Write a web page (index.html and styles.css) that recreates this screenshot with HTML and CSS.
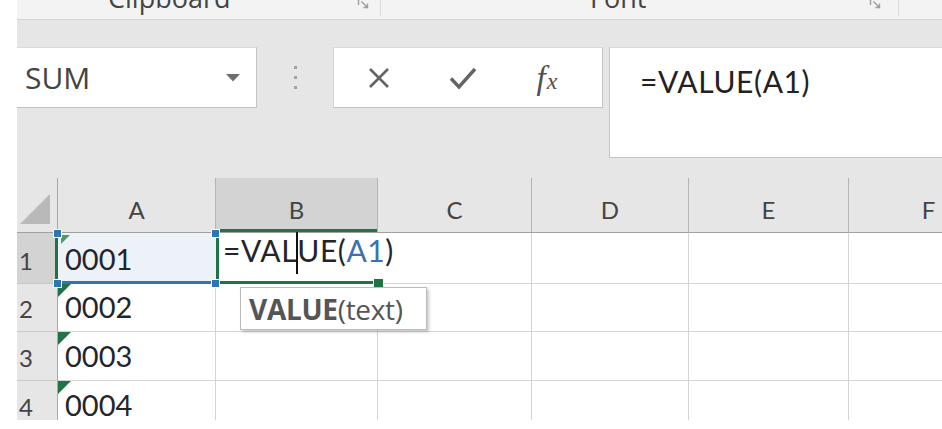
FILE: index.html
```html
<!DOCTYPE html>
<html lang="en">
<head>
  <meta charset="UTF-8" />
  <meta name="viewport" content="width=device-width, initial-scale=1.0" />
  <title>VALUE(A1)</title>
  <link rel="stylesheet" href="styles.css">
</head>
<body>
  <div class="window">
    <div class="ribbon-foot">
      <div class="group group-clipboard">
        <span class="group-label">Clipboard</span>
        <svg class="launcher" width="13" height="13" viewBox="0 0 13 13"><path d="M1.5 8V1.5H8M4.5 4.5L10.5 10.5M10.5 6.5V10.5H6.5" fill="none" stroke="#9d9d9d" stroke-width="1.4"/></svg>
      </div>
      <div class="group group-font">
        <span class="group-label">Font</span>
        <svg class="launcher" width="13" height="13" viewBox="0 0 13 13"><path d="M1.5 8V1.5H8M4.5 4.5L10.5 10.5M10.5 6.5V10.5H6.5" fill="none" stroke="#9d9d9d" stroke-width="1.4"/></svg>
      </div>
    </div>

    <div class="formula-row">
      <div class="name-box">
        <span>SUM</span>
        <svg class="drop" width="14" height="8" viewBox="0 0 14 8"><path d="M0 0H14L7 7.5Z" fill="#6e6e6e"/></svg>
      </div>
      <div class="grip"><i></i><i></i><i></i></div>
      <div class="fx-buttons">
        <span class="btn">
          <svg width="22" height="22" viewBox="0 0 22 22"><path d="M2 2L20 20M20 2L2 20" stroke="#646464" stroke-width="2.6" fill="none"/></svg>
        </span>
        <span class="btn">
          <svg width="28" height="24" viewBox="0 0 28 24"><path d="M2 12.5L10 21L26 3" stroke="#646464" stroke-width="3.4" fill="none"/></svg>
        </span>
        <span class="btn fx"><i>f</i><i class="fx-x">x</i></span>
      </div>
      <div class="formula-input">=VALUE(A1)</div>
    </div>

    <div class="sheet">
      <div class="corner">
        <svg width="30" height="30" viewBox="0 0 30 30"><path d="M30 0V30H0Z" fill="#b9b9b9"/></svg>
      </div>
      <div class="col-head">A</div>
      <div class="col-head active">B</div>
      <div class="col-head">C</div>
      <div class="col-head">D</div>
      <div class="col-head">E</div>
      <div class="col-head">F</div>

      <div class="row-head active"><span>1</span></div>
      <div class="cell ref flag flag-small"><span>0001</span></div>
      <div class="cell edit">
        <span>=VAL<i class="caret"></i>UE(<b class="ref-text">A1</b>)</span>
        <i class="fill-handle"></i>
      </div>
      <div class="cell"></div>
      <div class="cell"></div>
      <div class="cell"></div>
      <div class="cell"></div>

      <div class="row-head"><span>2</span></div>
      <div class="cell flag"><span>0002</span></div>
      <div class="cell"></div>
      <div class="cell"></div>
      <div class="cell"></div>
      <div class="cell"></div>
      <div class="cell"></div>

      <div class="row-head"><span>3</span></div>
      <div class="cell flag"><span>0003</span></div>
      <div class="cell"></div>
      <div class="cell"></div>
      <div class="cell"></div>
      <div class="cell"></div>
      <div class="cell"></div>

      <div class="row-head"><span>4</span></div>
      <div class="cell flag"><span>0004</span></div>
      <div class="cell"></div>
      <div class="cell"></div>
      <div class="cell"></div>
      <div class="cell"></div>
      <div class="cell"></div>

      <!-- range handles of the A1 reference -->
      <i class="handle h-tl"></i>
      <i class="handle h-tr"></i>
      <i class="handle h-bl"></i>
      <i class="handle h-br"></i>

      <div class="tooltip"><b>VALUE</b>(text)</div>
    </div>
  </div>
</body>
</html>
```

FILE: styles.css
```css
* {
  box-sizing: border-box;
  margin: 0;
  padding: 0;
}

body {
  background: #ffffff;
  width: 942px;
  height: 429px;
  overflow: hidden;
  font-family: 'Open Sans', sans-serif;
}

.window {
  margin-left: 17px;
  height: 420px;
  background: #e6e6e6;
  overflow: hidden;
}

/* ribbon group captions, cut at the top */
.ribbon-foot {
  height: 20px;
  background: #f3f3f3;
  border-bottom: 1px solid #d3d3d3;
  display: flex;
  align-items: flex-start;
  overflow: hidden;
}

.group {
  height: 16px;
  display: flex;
  align-items: flex-end;
  border-right: 1px solid #dadada;
}

.group-clipboard {
  width: 364px;
}

.group-font {
  width: 518px;
}

.group-label {
  font-size: 27px;
  line-height: 26px;
  color: #444;
  margin-bottom: 5px;
}

.group-clipboard .group-label {
  margin-left: 91px;
}

.group-font .group-label {
  margin-left: 209px;
}

.launcher {
  align-self: flex-start;
  margin-top: -3px;
  margin-left: auto;
}

.group-clipboard .launcher {
  margin-right: 10px;
}

.group-font .launcher {
  margin-right: 16px;
}

/* name box + formula bar */
.formula-row {
  height: 158px;
  padding-top: 27px;
  display: flex;
  align-items: flex-start;
}

.name-box,
.fx-buttons {
  height: 61px;
  background: #ffffff;
  border-top: 1px solid #dadada;
  border-right: 1px solid #c4c4c4;
  border-bottom: 1px solid #c4c4c4;
  display: flex;
  align-items: center;
}

.name-box {
  width: 240px;
  padding: 0 16px 0 8px;
  justify-content: space-between;
  font-size: 30px;
  color: #444;
}

.grip {
  width: 76px;
  height: 61px;
  display: flex;
  flex-direction: column;
  align-items: center;
  justify-content: center;
  gap: 7px;
}

.grip i {
  width: 3px;
  height: 3px;
  background: #a3a3a3;
}

.fx-buttons {
  width: 270px;
  padding-left: 3px;
  border-left: 1px solid #d2d2d2;
}

.btn {
  width: 84px;
  display: flex;
  justify-content: center;
  align-items: center;
}

.fx {
  font-family: 'Liberation Serif', serif;
  font-style: italic;
  color: #505050;
  font-size: 33px;
  line-height: 34px;
}

.fx i {
  font-style: italic;
}

.fx-x {
  font-size: 24px;
  margin: 7px 0 0 1px;
}

.formula-input {
  flex: 1;
  height: 111px;
  margin-left: 6px;
  background: #ffffff;
  border-top: 1px solid #dadada;
  border-left: 1px solid #c4c4c4;
  border-bottom: 1px solid #c4c4c4;
  padding: 18px 0 0 30px;
  font-family: 'Lato', sans-serif;
  font-size: 30px;
  line-height: 30px;
  letter-spacing: 0.6px;
  color: #222;
}

/* worksheet */
.sheet {
  position: relative;
  display: grid;
  grid-template-columns: 41px 158px 162px 154px 157px 160px 160px;
  grid-template-rows: 55px 51px 48px 49px 49px;
  font-family: 'Lato', sans-serif;
}

.corner,
.col-head,
.row-head {
  background: #e6e6e6;
  color: #444;
  font-size: 24px;
  line-height: 24px;
  display: flex;
  align-items: flex-end;
}

.corner {
  border-right: 1px solid #a8a8a8;
  border-bottom: 1px solid #a0a0a0;
  padding: 0 0 8px 3px;
}

.col-head {
  justify-content: center;
  border-right: 1px solid #b5b5b5;
  border-bottom: 1px solid #a0a0a0;
  padding-bottom: 10px;
}

.col-head.active {
  background: #d3d3d3;
  box-shadow: inset 0 -3px 0 #217346;
}

.row-head {
  border-right: 1px solid #a8a8a8;
  border-bottom: 1px solid #c9c9c9;
  padding: 0 0 10px 2px;
}

.row-head.active {
  background: #d3d3d3;
  border-right: 3px solid #217346;
}

.cell {
  position: relative;
  background: #ffffff;
  border-right: 1px solid #d4d4d4;
  border-bottom: 1px solid #d4d4d4;
  display: flex;
  align-items: flex-end;
  padding: 0 0 9px 7px;
  font-size: 29px;
  line-height: 30px;
  color: #23252b;
  white-space: nowrap;
}

.cell.ref {
  background: #edf2f9;
  border-right: none;
  border-bottom: 3px solid #2f75b5;
  padding-bottom: 7px;
}

.cell.edit {
  z-index: 1;
  border-left: 3px solid #217346;
  border-right: none;
  border-bottom: 3px solid #217346;
  padding: 0 0 7px 4px;
  overflow: visible;
  font-size: 30px;
  letter-spacing: 0.6px;
}

.ref-text {
  font-weight: normal;
  color: #3d6fb6;
}

.caret {
  display: inline-block;
  width: 2px;
  height: 42px;
  margin: 0 -1px;
  background: #111;
  vertical-align: -12px;
}

.fill-handle {
  position: absolute;
  right: -6px;
  bottom: -7px;
  width: 11px;
  height: 10px;
  background: #217346;
  border: 1px solid #ffffff;
}

/* number stored as text marker */
.flag::before {
  content: "";
  position: absolute;
  left: 0;
  top: 0;
  border-top: 13px solid #227447;
  border-right: 13px solid transparent;
}

.flag-small::before {
  left: 3px;
  top: 2px;
  border-top: 9px solid #4e9a68;
  border-right: 9px solid transparent;
}

.handle {
  position: absolute;
  z-index: 2;
  width: 9px;
  height: 9px;
  background: #2f75b5;
  border: 1px solid #ffffff;
}

.h-tl { left: 36px; top: 51px; }
.h-tr { left: 194px; top: 51px; }
.h-bl { left: 36px; top: 101px; }
.h-br { left: 194px; top: 101px; }

.tooltip {
  position: absolute;
  z-index: 3;
  left: 223px;
  top: 109px;
  width: 187px;
  height: 43px;
  background: #ffffff;
  border: 1px solid #bcbcbc;
  box-shadow: 2px 2px 3px rgba(0, 0, 0, 0.22);
  display: flex;
  align-items: center;
  padding-left: 8px;
  font-family: 'Open Sans', sans-serif;
  font-size: 28px;
  letter-spacing: -0.3px;
  color: #555;
  white-space: nowrap;
}

.tooltip b {
  font-weight: 700;
}
```
